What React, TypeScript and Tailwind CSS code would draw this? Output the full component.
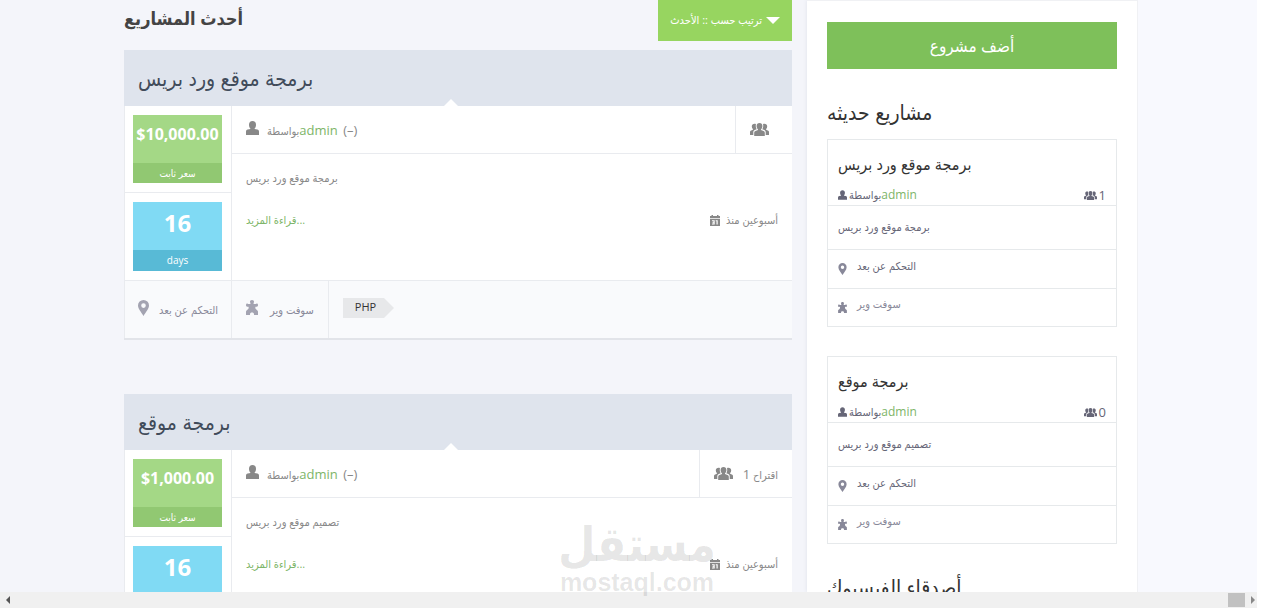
import clsx from "clsx";

type IconProps = { className?: string };

interface Project {
  title: string;
  summary: string;
  price: string;
  days: number;
  offers: number;
  location: string;
  category: string;
  tag: string;
}

const projects: Project[] = [
  {
    title: "برمجة موقع ورد بريس",
    summary: "برمجة موقع ورد بريس",
    price: "$10,000.00",
    days: 16,
    offers: 0,
    location: "التحكم عن بعد",
    category: "سوفت وير",
    tag: "PHP",
  },
  {
    title: "برمجة موقع",
    summary: "تصميم موقع ورد بريس",
    price: "$1,000.00",
    days: 16,
    offers: 1,
    location: "التحكم عن بعد",
    category: "سوفت وير",
    tag: "PHP",
  },
];

const recent = [
  { title: "برمجة موقع ورد بريس", summary: "برمجة موقع ورد بريس", count: 1 },
  { title: "برمجة موقع", summary: "تصميم موقع ورد بريس", count: 0 },
];

function UserIcon({ className }: IconProps) {
  return (
    <svg viewBox="0 0 13 14" fill="currentColor" className={className} aria-hidden="true">
      <path d="M6.5 0C8.700 0 10 1.500 10 3.700c0 1.600-.6 3.100-1.400 3.900v.5l2.700.5c1.100.3 1.700 1 1.700 2.100V14H0v-3.300c0-1.100.6-1.800 1.700-2.100l2.700-.5v-.5C3.600 6.800 3 5.300 3 3.700 3 1.500 4.300 0 6.500 0z" />
    </svg>
  );
}

function GroupIcon({ className }: IconProps) {
  return (
    <svg viewBox="0 0 19 13" fill="currentColor" className={className} aria-hidden="true">
      <path d="M9.500 0c1.800 0 2.900 1.200 2.900 3 0 1.500-.6 2.700-1.400 3.400v.7l2.500.9c.9.400 1.300 1 1.300 1.900V13H4.200V9.900c0-.9.4-1.500 1.300-1.900L8 7.100v-.7C7.200 5.700 6.600 4.500 6.600 3 6.600 1.200 7.700 0 9.500 0z" />
      <path d="M4.600.8c.6 0 1 .1 1.400.4-.5 1.700-.2 3.700.7 5l-2 .8C3.700 7.500 3.300 8.300 3.300 9.300V12H0V9c0-.8.4-1.300 1.200-1.600l1.700-.7V6C2.200 5.400 1.800 4.500 1.800 3.400 1.800 1.800 2.900.8 4.600.8zM14.400.8c-.6 0-1 .1-1.400.4.500 1.700.2 3.700-.7 5l2 .8c1 .5 1.400 1.300 1.400 2.300V12H19V9c0-.8-.4-1.300-1.200-1.600l-1.700-.7V6c.7-.6 1.100-1.500 1.100-2.600 0-1.600-1.100-2.600-2.800-2.600z" />
    </svg>
  );
}

function PinIcon({ className }: IconProps) {
  return (
    <svg viewBox="0 0 11 16" fill="currentColor" className={className} aria-hidden="true">
      <path
        fillRule="evenodd"
        d="M5.500 0A5.500 5.500 0 0 1 11 5.500C11 9 7.800 12 5.500 16 3.200 12 0 9 0 5.500A5.500 5.500 0 0 1 5.500 0zm0 3.300a2.300 2.300 0 1 0 0 4.600 2.300 2.300 0 0 0 0-4.600z"
      />
    </svg>
  );
}

function PuzzleIcon({ className }: IconProps) {
  return (
    <svg viewBox="0 0 12 15" fill="currentColor" className={className} aria-hidden="true">
      <path d="M6 0c1.300 0 2 .8 2 1.800 0 .8-.5 1.300-.5 2.200h2.300c.2-.4.500-.6 1-.6.8 0 1.200.7 1.200 1.600s-.4 1.700-1.200 1.700c-.5 0-.9-.2-1.300.1-.3.700-.2 1.600.3 2.300.5.800 1.900 1.200 2.200 2.400V15H8v-1c0-.9-.8-1.500-2-1.500S4 13.100 4 14v1H0v-3.500c.3-1.200 1.700-1.600 2.200-2.400.5-.7.600-1.600.3-2.300-.4-.3-.8-.1-1.300-.1C.4 6.700 0 5.900 0 5s.4-1.600 1.200-1.600c.5 0 .8.200 1 .6h2.300c0-.9-.5-1.400-.5-2.200C4 .8 4.700 0 6 0z" />
    </svg>
  );
}

function CalendarIcon({ className }: IconProps) {
  return (
    <svg viewBox="0 0 10 11" fill="currentColor" className={className} aria-hidden="true">
      <path d="M0 1h1.500V0h1.500v1h4V0h1.500v1H10v2H0z" />
      <path
        fillRule="evenodd"
        d="M0 3.800h10V11H0zM2 5.300v1h1.500v.6H2.500v.8h1v.7H2v1h2.700V5.300zM5.700 5.300v1h.8v3.100h1.200V5.300z"
      />
    </svg>
  );
}

function Stat({ value, label, tone }: { value: string; label: string; tone: "green" | "blue" }) {
  return (
    <div className={clsx("text-center text-white", tone === "green" ? "bg-[#a4d886]" : "bg-[#80daf4]")}>
      <div className={clsx("h-12 font-bold", tone === "green" ? "text-base leading-[38px]" : "text-2xl leading-[42px]")}>
        {value}
      </div>
      <div className={clsx("text-[10px]", tone === "green" ? "h-5 bg-[#91c872] leading-5" : "h-[21px] bg-[#58bad6] leading-[21px]")}>
        {label}
      </div>
    </div>
  );
}

function ProjectCard({ project }: { project: Project }) {
  return (
    <article className="mb-[54px] border-b-2 border-[#e2e4e9] bg-white">
      <header className="relative h-14 bg-[#dfe4ed] px-3.5">
        <h2 className="text-[21px] leading-14 text-[#414b5a]">{project.title}</h2>
        <span className="absolute bottom-0 left-[320px] border-x-7 border-b-7 border-x-transparent border-b-white" />
      </header>

      <div className="flex border-l border-[#e9ebef]">
        <div className="w-[107px] shrink-0 border-r border-[#e9ebef]">
          <div className="border-b border-[#e9ebef] py-[9px] pr-[9px] pl-2">
            <Stat value={project.price} label="سعر ثابت" tone="green" />
          </div>
          <div className="py-[9px] pr-[9px] pl-2">
            <Stat value={String(project.days)} label="days" tone="blue" />
          </div>
        </div>

        <div className="min-w-0 flex-1">
          <div className="flex h-12 border-b border-[#e9ebef] text-[#888]">
            <div className="flex flex-1 items-center px-3.5">
              <UserIcon className="mr-2 mb-1 h-3.5 w-[13px]" />
              <p className="pt-0.5 text-[11px]">
                بواسطة<a href="#admin" className="text-[13px] text-[#7db568]">admin</a>
                <span className="pl-0.5 text-[13px]"> (–)</span>
              </p>
            </div>
            <div className={clsx("flex items-center border-l border-[#e9ebef] pl-3.5", project.offers ? "pr-3.5" : "pr-[23px]")}>
              <GroupIcon className="h-[13px] w-[19px]" />
              {project.offers > 0 && (
                <span className="pt-0.5 pl-2.5 text-[11px]">
                  <span className="text-[13px]">{project.offers}</span> اقتراح
                </span>
              )}
            </div>
          </div>
          <div className="px-3.5 text-[11px] text-[#888]">
            <p className="pt-4 leading-4">{project.summary}</p>
            <div className="flex items-center justify-between pt-6">
              <a href="#more" className="leading-5 text-[#7db568]">قراءة المزيد...</a>
              <span className="flex items-center gap-1.5 leading-5">
                <CalendarIcon className="h-[11px] w-2.5" />
                أسبوعين منذ
              </span>
            </div>
          </div>
        </div>
      </div>

      <footer className="flex h-[58px] border-t border-l border-[#e9ebef] bg-[#f9fafc] text-[11px] text-[#889]">
        <div className="flex items-center gap-2.5 border-r border-[#e9ebef] px-[13px]">
          <PinIcon className="mb-1 h-4 w-[11px] text-[#a3a3b1]" />
          <span className="pt-0.5">{project.location}</span>
        </div>
        <div className="flex items-center gap-3 border-r border-[#e9ebef] px-3.5">
          <PuzzleIcon className="mb-1 h-[15px] w-3 text-[#a3a3b1]" />
          <span className="pt-0.5">{project.category}</span>
        </div>
        <div className="flex items-center px-3.5 pb-1">
          <a href="#php" className="flex h-5 items-center bg-[#e7e8ea] pr-2 pl-3 text-[#333]">{project.tag}</a>
          <span className="border-y-10 border-l-10 border-y-transparent border-l-[#e7e8ea]" />
        </div>
      </footer>
    </article>
  );
}

function RecentCard({ title, summary, count }: { title: string; summary: string; count: number }) {
  return (
    <li className="mb-[29px] border border-[#e6e9eb] text-[11px] text-[#667]">
      <h3 className="px-2.5 pt-2.5 text-base leading-7 text-[#333]">{title}</h3>
      <div className="flex items-center justify-between border-b border-[#e6e9eb] px-2.5 pt-[7px] leading-5">
        <span className="flex items-center">
          <UserIcon className="mr-0.5 h-2.5 w-[9px]" />
          بواسطة
          <a href="#admin" className="text-xs text-[#7db568]">admin</a>
        </span>
        <span className="flex items-center gap-0.5">
          <GroupIcon className="h-[9px] w-[13px]" />
          <span className="text-[13px]">{count}</span>
        </span>
      </div>
      <p className="h-11 border-b border-[#e6e9eb] px-2.5 leading-[42px]">{summary}</p>
      <div className="flex h-[39px] items-center gap-2.5 border-b border-[#e6e9eb] px-2.5">
        <PinIcon className="h-3 w-[9px] text-[#889]" />
        <span className="pb-1.5">التحكم عن بعد</span>
      </div>
      <div className="flex h-[37px] items-center gap-2.5 px-2.5 text-[#889]">
        <PuzzleIcon className="h-[11px] w-[9px]" />
        <span className="pb-1.5">سوفت وير</span>
      </div>
    </li>
  );
}

export default function App() {
  return (
    <div className="flex h-screen flex-col overflow-hidden bg-white font-['Open_Sans','DejaVu_Sans_Condensed','DejaVu_Sans',sans-serif]">
      <div className="flex min-h-0 flex-1 overflow-hidden pr-[17px]">
        <main className="min-w-0 flex-1 bg-[#f4f5fa] pr-[15px] pl-[124px]">
          <div className="flex h-[50px] items-start justify-between">
            <h1 className="text-lg leading-9 font-bold text-[#444]">أحدث المشاريع</h1>
            <button className="flex h-[41px] items-center gap-1 bg-[#97d560] px-3 text-[11px] text-white">
              ترتيب حسب :: الأحدث
              <span className="border-x-7 border-t-7 border-x-transparent border-t-white" />
            </button>
          </div>
          {projects.map((project) => (
            <ProjectCard key={project.title} project={project} />
          ))}
        </main>

        <aside className="w-[331px] shrink-0 border-t border-r border-[#f0f1f4] bg-white px-5 pt-[21px] shadow-[0_0_4px_#dfe1ea]">
          <button className="h-[47px] w-full bg-[#7ec05a] text-[17px] text-white">أضف مشروع</button>
          <h2 className="pt-6 pb-2 text-[21px] leading-[38px] text-[#333]">مشاريع حديثه</h2>
          <ul>
            {recent.map((item) => (
              <RecentCard key={item.title} {...item} />
            ))}
          </ul>
          <h2 className="text-[21px] leading-7 text-[#333]">أصدقاء الفيسبوك</h2>
        </aside>
        <div className="w-[119px] shrink-0 bg-[#f8f9fe]" />
      </div>

      <div className="h-4 shrink-0 pr-[17px]">
        <div className="flex h-4 items-center justify-between bg-[#f0f0f0] pr-0.5 pl-1.5">
          <span className="border-y-4 border-r-4 border-y-transparent border-r-[#555]" />
          <span className="flex items-center gap-1.5">
            <span className="h-3.5 w-[17px] bg-[#c1c1c1]" />
            <span className="border-y-4 border-l-4 border-y-transparent border-l-[#888]" />
          </span>
        </div>
      </div>

      {/* Site mark laid over the page */}
      <div className="pointer-events-none absolute bottom-3 left-[558px] flex flex-col items-center font-bold text-black/10">
        <span className="text-5xl leading-[50px]">مستقل</span>
        <span className="font-['Liberation_Sans',sans-serif] text-[25px] leading-7">mostaql.com</span>
      </div>
    </div>
  );
}
